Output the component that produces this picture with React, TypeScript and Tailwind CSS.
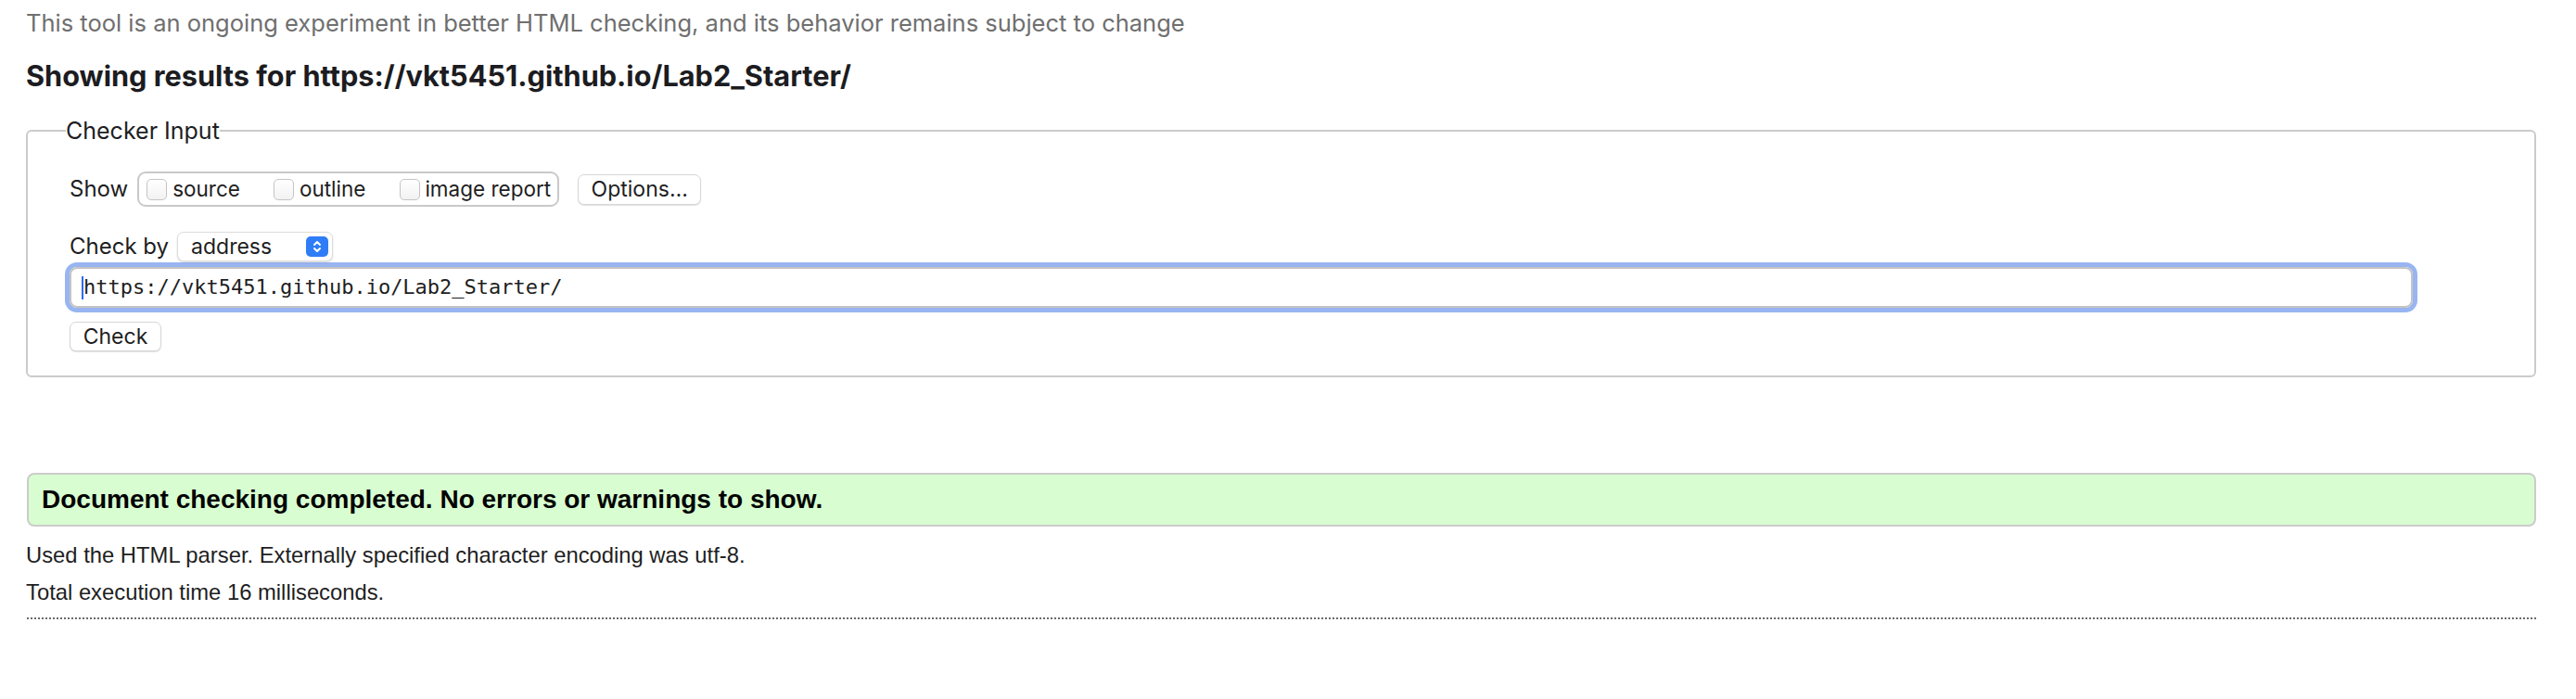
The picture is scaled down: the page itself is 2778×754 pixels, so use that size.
import React from "react";

function Checkbox() {
  return (
    <span className="inline-block shrink-0 w-[22px] h-[23px] rounded-[5px] border border-[#c4c4c4] bg-gradient-to-b from-[#ffffff] to-[#f2f2f2] shadow-[inset_0_1px_0_#ffffff]" />
  );
}

export default function App() {
  return (
    <div className="w-[2778px] min-h-[754px] bg-white pl-[28px] pr-[43px] pt-[10px] text-[#1e1e22] [font-family:Inter,'Noto_Sans',sans-serif]">
      <p className="text-[25.5px] leading-[30px] text-[#6f6f6f] whitespace-nowrap">
        This tool is an ongoing experiment in better HTML checking, and its behavior remains subject to change
      </p>
      <h2 className="mt-[25px] text-[30.7px] leading-[34px] font-bold text-[#1c1c21] whitespace-nowrap">
        Showing results for https://vkt5451.github.io/Lab2_Starter/
      </h2>

      <fieldset className="mt-[27px] border-2 border-[#cbcbcb] rounded-[6px] pl-[41px] pb-[26px]">
        <legend className="text-[25px] leading-[30px] text-[#1e1e22] whitespace-nowrap">Checker Input</legend>
        <div className="pl-[4px]">
          <div className="mt-[28px] flex items-center h-[40px]">
            <span className="text-[24px] leading-[30px]">Show</span>
            <div className="ml-[10px] h-[38px] w-[455px] flex items-center border-2 border-[#c9c9c9] rounded-[9px] pl-[8px] whitespace-nowrap">
              <Checkbox />
              <span className="ml-[6px] text-[22.5px] leading-[28px]">source</span>
              <span className="ml-[36px] flex"><Checkbox /></span>
              <span className="ml-[6px] text-[22.5px] leading-[28px]">outline</span>
              <span className="ml-[37px] flex"><Checkbox /></span>
              <span className="ml-[5px] text-[22.5px] leading-[28px]">image report</span>
            </div>
            <button className="ml-[20px] h-[33px] w-[133px] flex items-center justify-center rounded-[7px] border border-[#d6d6d6] bg-white shadow-[0_1px_1px_rgba(0,0,0,0.12)] text-[23px] leading-[28px] text-[#1e1e22]">
              Options…
            </button>
          </div>

          <div className="mt-[26px] flex items-center h-[32px]">
            <span className="text-[24px] leading-[30px]">Check by</span>
            <div className="ml-[9px] h-[32px] w-[168px] flex items-center justify-between rounded-[7px] border border-[#dcdcdc] bg-white shadow-[0_1px_2px_rgba(0,0,0,0.15)] pl-[14px] pr-[4px]">
              <span className="text-[23px] leading-[28px]">address</span>
              <span className="w-[24px] h-[22px] rounded-[5px] bg-[#2f7df6] flex items-center justify-center">
                <svg width="12" height="16" viewBox="0 0 12 16" fill="none" stroke="white" strokeWidth="2" strokeLinecap="round" strokeLinejoin="round">
                  <path d="M3 6 L6 3 L9 6" />
                  <path d="M3 10 L6 13 L9 10" />
                </svg>
              </span>
            </div>
          </div>

          <div className="mt-[6px] h-[44px] w-[2527px] flex items-center border-2 border-[#c4c4c4] rounded-[8px] shadow-[0_0_0_5px_#98b5f1] pl-[11px]">
            <span className="w-[2px] h-[25px] bg-[#2a6cf3]" />
            <span className="text-[22px] leading-[28px] text-[#1e1e22] [font-family:'DejaVu_Sans_Mono',monospace]">
              https://vkt5451.github.io/Lab2_Starter/
            </span>
          </div>

          <button className="mt-[15px] h-[32px] w-[99px] flex items-center justify-center rounded-[7px] border border-[#d6d6d6] bg-white shadow-[0_1px_1px_rgba(0,0,0,0.12)] text-[23px] leading-[28px] text-[#1e1e22]">
            Check
          </button>
        </div>
      </fieldset>

      <div className="[font-family:'Liberation_Sans',Arial,sans-serif]">
        <div className="mt-[103px] ml-[1px] h-[58px] flex items-center border-2 border-[#cccccc] rounded-[8px] bg-[#d8fdd1] pl-[14px]">
          <span className="text-[28px] leading-[32px] font-bold text-black whitespace-nowrap">
            Document checking completed. No errors or warnings to show.
          </span>
        </div>
        <p className="mt-[11px] text-[23.8px] leading-[40px] text-[#1e1e22] whitespace-nowrap">
          Used the HTML parser. Externally specified character encoding was utf-8.
        </p>
        <p className="text-[23.8px] leading-[40px] text-[#1e1e22] whitespace-nowrap">Total execution time 16 milliseconds.</p>
        <div className="mt-[7px] ml-[1px] border-t-2 border-dotted border-[#6a6a6a]" />
      </div>
    </div>
  );
}
